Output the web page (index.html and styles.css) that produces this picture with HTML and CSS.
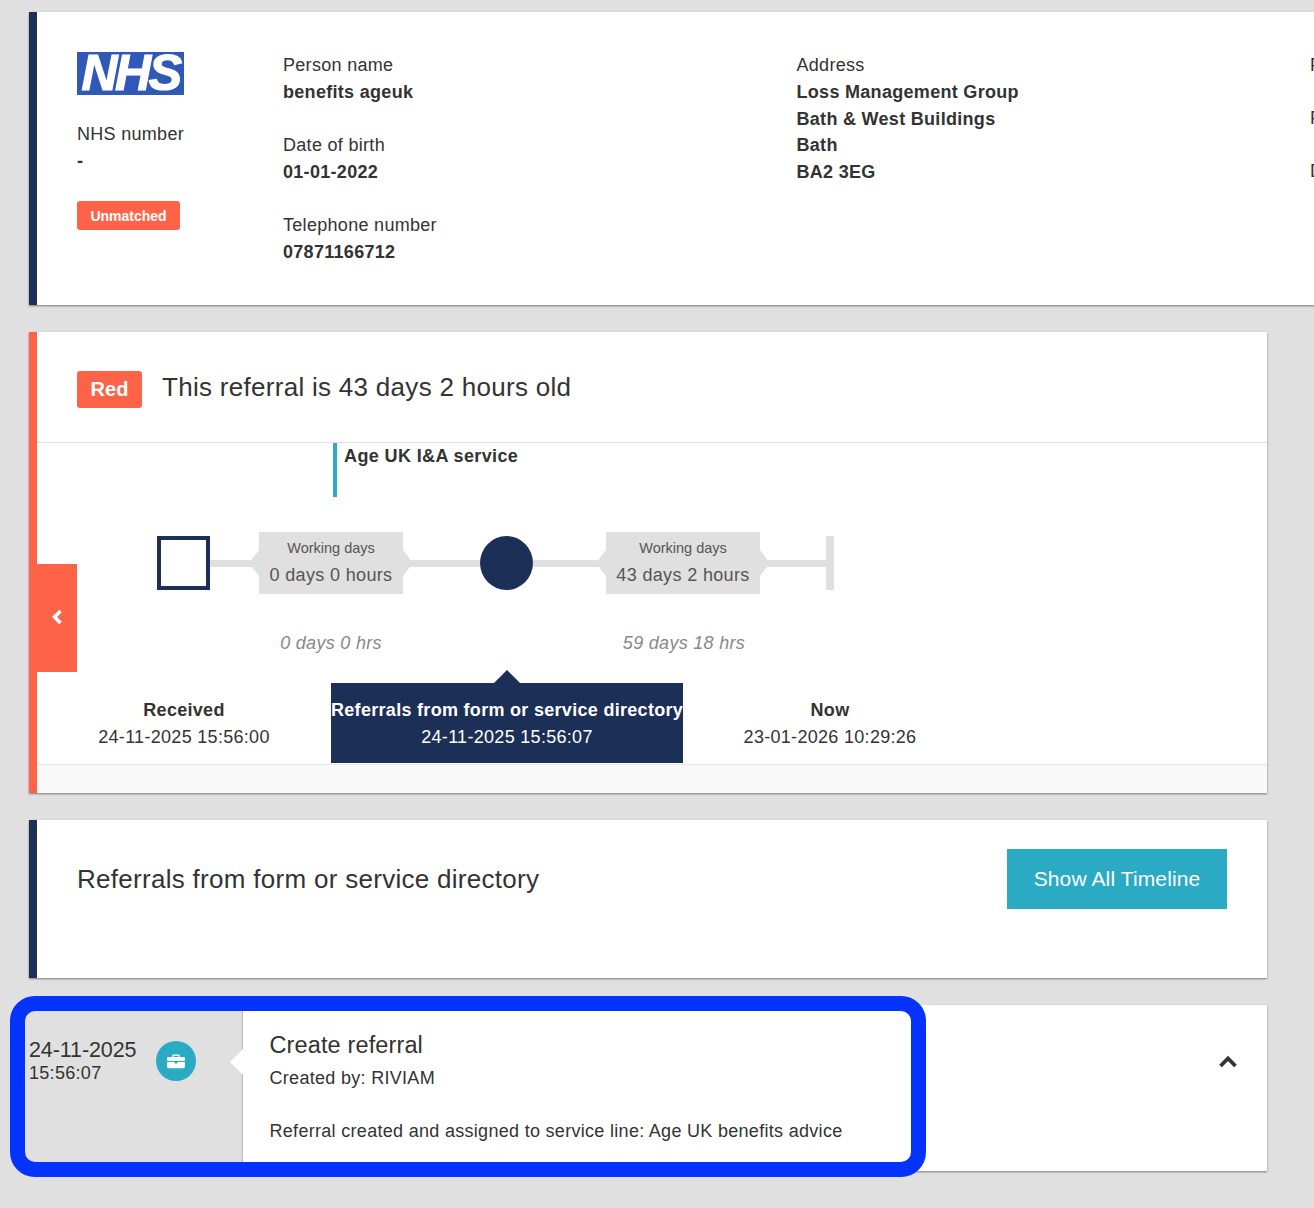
FILE: index.html
```html
<!DOCTYPE html>
<html lang="en">
<head>
<meta charset="utf-8">
<title>Referral</title>
<link rel="stylesheet" href="styles.css">
</head>
<body>
<main class="page">
  <section class="card card-navy person">
    <div class="person-id">
      <div class="nhs-logo">NHS</div>
      <div class="field nhs-number"><span>NHS number</span><strong>-</strong></div>
      <span class="unmatched">Unmatched</span>
    </div>
    <div class="person-col col-name">
      <div class="field"><span>Person name</span><strong>benefits ageuk</strong></div>
      <div class="field"><span>Date of birth</span><strong>01-01-2022</strong></div>
      <div class="field"><span>Telephone number</span><strong>07871166712</strong></div>
    </div>
    <div class="person-col col-address">
      <div class="field"><span>Address</span><strong>Loss Management Group</strong><strong>Bath &amp; West Buildings</strong><strong>Bath</strong><strong>BA2 3EG</strong></div>
    </div>
    <div class="person-col col-extra">
      <div class="field"><span>Provider</span></div>
      <div class="field"><span>Phone</span></div>
      <div class="field"><span>Date</span></div>
    </div>
  </section>

  <section class="card card-red referral">
    <header class="referral-head">
      <span class="rag">Red</span>
      <h2 class="heading">This referral is 43 days 2 hours old</h2>
    </header>
    <div class="service">Age UK I&amp;A service</div>
    <div class="track">
      <div class="node-square"></div>
      <div class="line line-a"></div>
      <div class="chip chip-a"><small>Working days</small><span>0 days 0 hours</span></div>
      <div class="line line-b"></div>
      <div class="node-circle"></div>
      <div class="line line-c"></div>
      <div class="chip chip-b"><small>Working days</small><span>43 days 2 hours</span></div>
      <div class="line line-d"></div>
      <div class="node-tick"></div>
    </div>
    <div class="durations">
      <em class="dur-a">0 days 0 hrs</em>
      <em class="dur-b">59 days 18 hrs</em>
    </div>
    <div class="stages">
      <div class="stage"><strong>Received</strong><span>24-11-2025 15:56:00</span></div>
      <div class="stage stage-active"><strong>Referrals from form or service directory</strong><span>24-11-2025 15:56:07</span></div>
      <div class="stage"><strong>Now</strong><span>23-01-2026 10:29:26</span></div>
    </div>
    <div class="referral-foot"></div>
    <button class="collapse-tab" type="button" aria-label="Collapse">
      <svg width="12" height="16" viewBox="0 0 12 16"><polyline points="9.500,2 3.500,8 9.500,14" fill="none" stroke="#fff" stroke-width="3.600"/></svg>
    </button>
  </section>

  <section class="card card-navy stage-title">
    <h2 class="heading">Referrals from form or service directory</h2>
    <button class="show-all" type="button">Show All Timeline</button>
  </section>

  <section class="event">
    <div class="event-side">
      <div class="event-time"><div class="event-date">24-11-2025</div><div class="event-hour">15:56:07</div></div>
      <div class="event-icon">
        <svg width="18" height="16" viewBox="0 0 20 18"><path d="M7 1.600h6a1.200 1.200 0 0 1 1.200 1.200V4.500H20V9H0V4.500h5.800V2.800A1.200 1.200 0 0 1 7 1.600zm.3 1.500v1.400h5.400V3.100z" fill="#fff" fill-rule="evenodd"/><path d="M0 10.200h8.400v1.600h3.200v-1.600H20v5.400a1.600 1.600 0 0 1-1.600 1.600H1.600A1.600 1.600 0 0 1 0 15.600z" fill="#fff"/></svg>
      </div>
    </div>
    <article class="event-card">
      <div class="event-body">
        <h3 class="event-title">Create referral</h3>
        <p class="event-by">Created by: RIVIAM</p>
        <p class="event-text">Referral created and assigned to service line: Age UK benefits advice</p>
      </div>
      <svg class="event-toggle" width="20" height="14" viewBox="0 0 20 14"><polyline points="2.500,11 10,3.500 17.500,11" fill="none" stroke="#333" stroke-width="3.800"/></svg>
    </article>
    <div class="highlight"></div>
  </section>
</main>
</body>
</html>
```
FILE: styles.css
```css
* { box-sizing: border-box; }
html, body { margin: 0; padding: 0; }
body {
  width: 1314px;
  height: 1208px;
  overflow: hidden;
  background: #e0e0e0;
  color: #333;
  font-family: "Liberation Sans", Arial, sans-serif;
  font-size: 18px;
  line-height: 27px;
  letter-spacing: .3px;
}
.page {
  display: flex;
  flex-direction: column;
  gap: 27px;
  padding: 12px 0 0 29px;
}
.card {
  width: 1238px;
  background: #fff;
  box-shadow: 0 1px 2px rgba(0, 0, 0, .45);
  position: relative;
}
.card-navy { border-left: 8px solid #1c2f56; }
.card-red { border-left: 8px solid #ff6347; }

/* person */
.person {
  display: flex;
  width: 1400px;
  height: 293px;
  padding: 40px 0 0 40px;
}
.person-id { width: 206px; flex: none; }
.nhs-logo {
  width: 107px;
  height: 43px;
  background: #3058b8;
  color: #fff;
  font-size: 50px;
  font-weight: 700;
  font-style: italic;
  line-height: 43px;
  letter-spacing: -2.500px;
  text-align: center;
  -webkit-text-stroke: 1.200px #fff;
}
.field { margin-bottom: 26px; }
.field span, .field strong { display: block; }
.nhs-number { margin: 26px 0 0; }
.unmatched {
  display: block;
  width: 103px;
  height: 29px;
  margin-top: 26px;
  border-radius: 3px;
  background: #ff6347;
  color: #fff;
  font-size: 14px;
  font-weight: 700;
  line-height: 30px;
  letter-spacing: 0;
  text-align: center;
}
.person-col { flex: none; }
.col-name { width: 513.500px; }
.col-address { width: 513.500px; }
.col-address strong { line-height: 26.500px; }
.col-extra { width: 120px; }

/* referral */
.referral { height: 461px; }
.referral-head {
  display: flex;
  align-items: center;
  gap: 20px;
  height: 111px;
  padding: 0 0 1px 40px;
  border-bottom: 1px solid #e0e0e0;
}
.rag {
  width: 65px;
  height: 37px;
  margin-top: 5px;
  border-radius: 3px;
  background: #ff6347;
  color: #fff;
  font-size: 20px;
  font-weight: 700;
  line-height: 37px;
  letter-spacing: 0;
  text-align: center;
}
.heading {
  margin: 0;
  font-size: 26px;
  font-weight: 400;
  line-height: 36px;
  letter-spacing: .29px;
}
.service {
  height: 54px;
  margin-left: 296px;
  padding-left: 7px;
  border-left: 4px solid #2aabc3;
  font-size: 18px;
  font-weight: 700;
  line-height: 26px;
  letter-spacing: .38px;
}
.track {
  display: flex;
  align-items: center;
  height: 62px;
  margin: 35px 0 0 120px;
}
.node-square {
  flex: none;
  width: 53px;
  height: 54px;
  border: 4px solid #1c2f56;
}
.node-circle {
  flex: none;
  width: 53px;
  height: 54px;
  border-radius: 50%;
  background: #1c2f56;
}
.node-tick {
  flex: none;
  width: 8px;
  height: 54px;
  background: #e0e0e0;
}
.line { flex: none; height: 7px; background: #e0e0e0; }
.line-a { width: 49px; }
.line-b { width: 77px; }
.line-c { width: 73px; }
.line-d { width: 66px; }
.chip {
  flex: none;
  position: relative;
  height: 62px;
  padding-top: 5px;
  background: #e0e0e0;
  color: #555;
  text-align: center;
}
.chip small { display: block; font-size: 14.500px; line-height: 22px; letter-spacing: 0; }
.chip span { display: block; font-size: 18px; line-height: 32px; letter-spacing: .35px; }
.chip::before, .chip::after {
  content: "";
  position: absolute;
  top: 18px;
  border-style: solid;
  border-width: 13px 0;
  border-color: transparent;
}
.chip::before { left: -10px; border-right: 10px solid #e0e0e0; }
.chip::after { right: -10px; border-left: 10px solid #e0e0e0; }
.chip-a { width: 144px; }
.chip-b { width: 154px; }
.durations {
  display: flex;
  height: 27px;
  margin: 36px 0 0 204px;
  color: #888;
}
.durations em { display: block; text-align: center; }
.dur-a { width: 180px; }
.dur-b { width: 180px; margin-left: 173px; }
.stages { display: flex; margin-top: 26px; height: 80px; }
.stage {
  flex: none;
  width: 294px;
  padding-top: 14px;
  line-height: 26.500px;
  text-align: center;
}
.stage strong, .stage span { display: block; white-space: nowrap; }
.stage-active {
  position: relative;
  width: 352px;
  background: #1c2f56;
  color: #fff;
}
.stage-active::before {
  content: "";
  position: absolute;
  top: -13px;
  left: 163px;
  border-style: solid;
  border-width: 0 13px 13px;
  border-color: transparent transparent #1c2f56;
}
.referral-foot {
  height: 29px;
  margin-top: 1px;
  border-top: 1px solid #e6e6e6;
  background: #f9f9f9;
}
.collapse-tab {
  position: absolute;
  top: 232px;
  left: 0;
  display: flex;
  align-items: center;
  justify-content: center;
  width: 40px;
  height: 108px;
  padding: 0 0 2px;
  border: 0;
  background: #ff6347;
}

/* stage title */
.stage-title {
  display: flex;
  justify-content: space-between;
  align-items: flex-start;
  height: 158px;
  padding: 29px 40px 0 40px;
}
.stage-title .heading { margin-top: 12px; }
.show-all {
  width: 220px;
  height: 60px;
  border: 0;
  background: #2aabc3;
  color: #fff;
  font-family: inherit;
  font-size: 21px;
  letter-spacing: .12px;
}

/* event */
.event {
  position: relative;
  display: flex;
  width: 1238px;
  height: 166px;
}
.event-side {
  flex: none;
  display: flex;
  width: 214px;
  padding-top: 32px;
}
.event-time { width: 127px; }
.event-date { font-size: 21.500px; line-height: 26px; letter-spacing: -.1px; }
.event-hour { font-size: 18px; line-height: 20px; }
.event-icon {
  display: flex;
  align-items: center;
  justify-content: center;
  width: 40px;
  height: 40px;
  margin-top: 4px;
  border-radius: 50%;
  background: #2aabc3;
}
.event-card {
  flex: 1;
  position: relative;
  display: flex;
  justify-content: space-between;
  background: #fff;
  box-shadow: 0 1px 2px rgba(0, 0, 0, .45);
}
.event-card::before {
  content: "";
  position: absolute;
  top: 44px;
  left: -13px;
  border-style: solid;
  border-width: 13px 13px 13px 0;
  border-color: transparent #fff transparent transparent;
}
.event-body { padding: 22px 0 0 26.500px; }
.event-title {
  margin: 0;
  font-size: 23.500px;
  font-weight: 400;
  line-height: 36px;
  letter-spacing: .13px;
}
.event-by { margin: 2px 0 0; }
.event-text { margin: 26px 0 0; }
.event-toggle { margin: 50px 29px 0 0; }
.highlight {
  position: absolute;
  top: -9px;
  left: -19px;
  width: 916px;
  height: 181px;
  border: 15px solid #0433ff;
  border-radius: 25px;
  pointer-events: none;
}
```
